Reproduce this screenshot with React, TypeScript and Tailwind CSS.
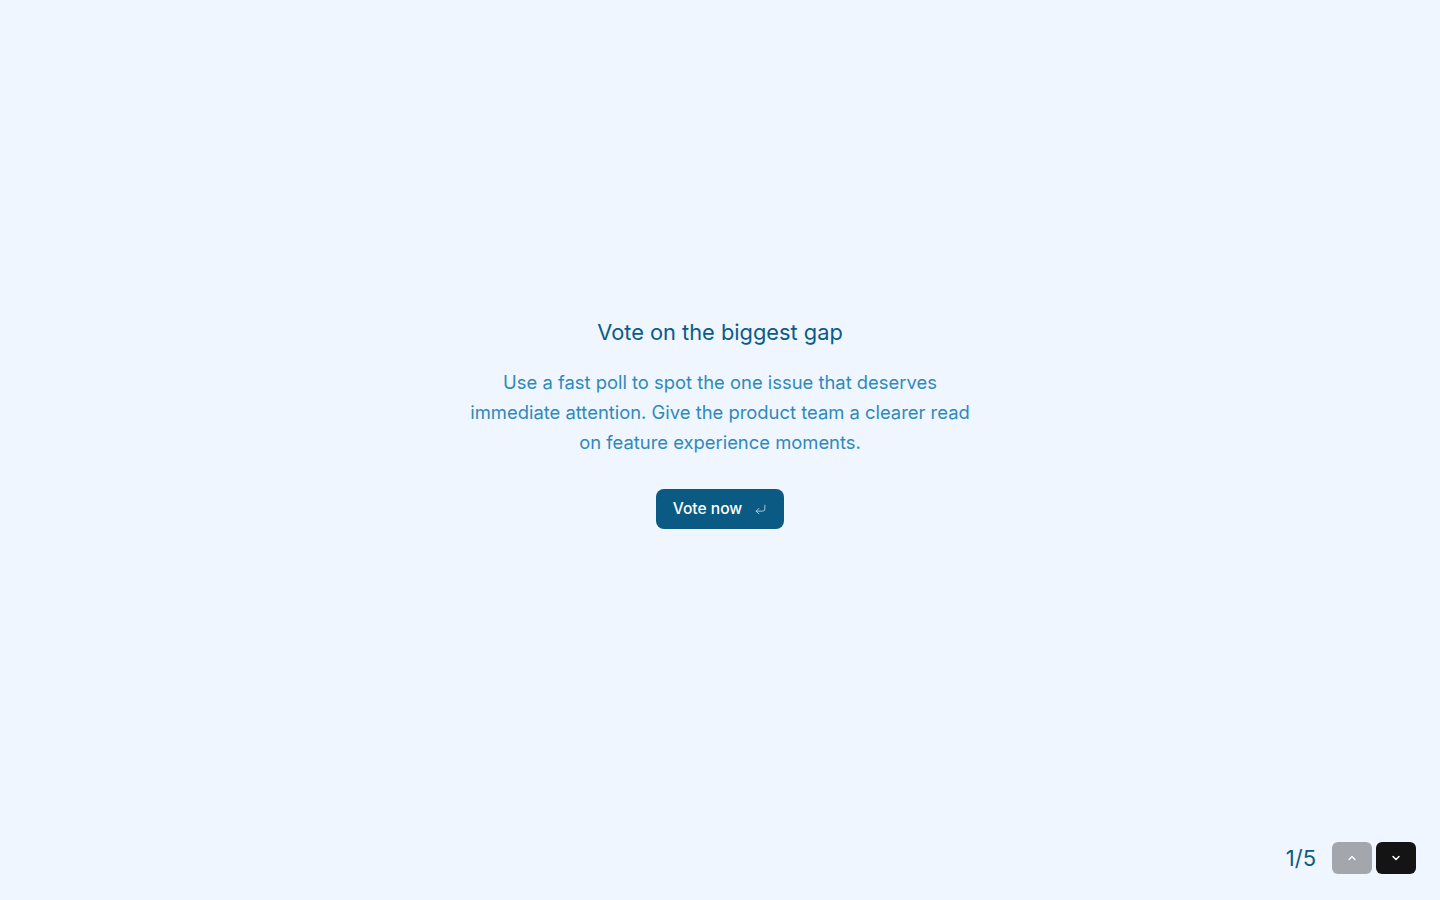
import { ChevronDown, ChevronUp, CornerDownLeft } from "lucide-react";

export default function App() {
    return (
        <div
            className="relative flex h-[900px] w-full flex-col items-center justify-center bg-[#eff6ff]"
            style={{ fontFamily: "Inter, 'Noto Sans', sans-serif" }}
        >
            <div className="-mt-[55px] flex flex-col items-center text-center">
                <h1 className="text-[21.8px] leading-[32px] font-normal text-[#0b5b87]">Vote on the biggest gap</h1>
                <p className="mt-[19px] max-w-[512px] text-[18.4px] leading-[30px] text-[#3089bb]">
                    Use a fast poll to spot the one issue that deserves immediate attention. Give the product team a
                    clearer read on feature experience moments.
                </p>
                <button className="mt-[32px] flex h-[40px] w-[128px] items-center justify-center gap-[12px] rounded-lg bg-[#0b5a84] text-[15.6px] font-medium text-white">
                    Vote now
                    <CornerDownLeft size={13} strokeWidth={1.75} className="text-[#a9cde3]" />
                </button>
            </div>

            <div className="absolute right-[24px] bottom-[26px] flex items-center">
                <span className="mr-[16px] text-[22px] leading-none font-normal text-[#0b5b87]">1/5</span>
                <button className="flex h-[32px] w-[40px] items-center justify-center rounded-md bg-[#a3a7ad] text-white">
                    <ChevronUp size={12} strokeWidth={2.5} />
                </button>
                <button className="ml-[4px] flex h-[32px] w-[40px] items-center justify-center rounded-md bg-[#141414] text-white">
                    <ChevronDown size={12} strokeWidth={3} />
                </button>
            </div>
        </div>
    );
}
